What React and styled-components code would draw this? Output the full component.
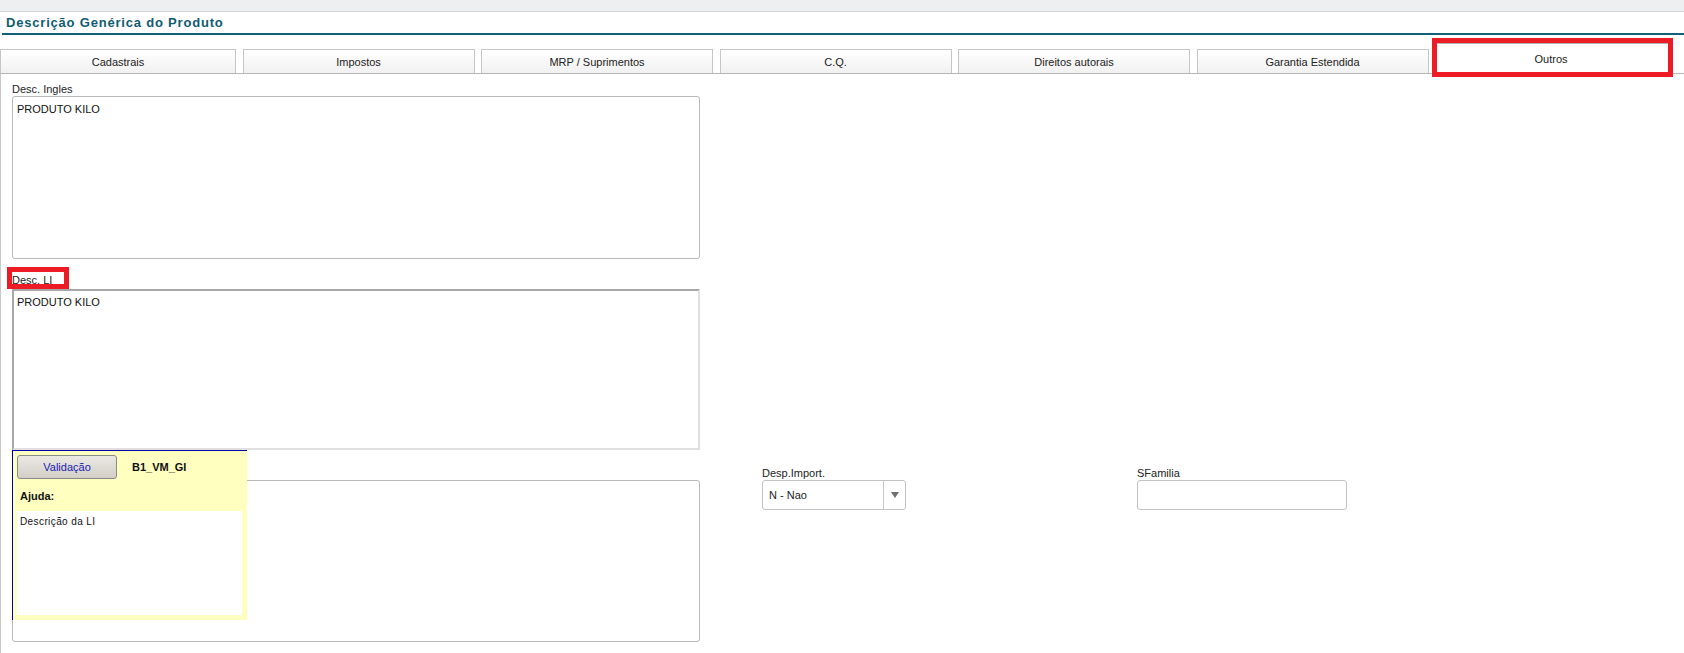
import React from "react";
import styled, { createGlobalStyle } from "styled-components";

const GlobalStyle = createGlobalStyle`
  *, *::before, *::after { box-sizing: border-box; }
  html, body {
    margin: 0;
    padding: 0;
    background: #ffffff;
  }
  body {
    font-family: "Liberation Sans", Arial, sans-serif;
    font-size: 11px;
    color: #1c1c1c;
  }
`;

const Page = styled.div`
  width: 1684px;
  height: 653px;
  overflow: hidden;
  display: flex;
  flex-direction: column;
  background: #ffffff;
`;

const TopBar = styled.div`
  flex: none;
  height: 12px;
  background: #eeeff1;
  border-bottom: 1px solid #d6d7d9;
`;

const Header = styled.h1`
  flex: none;
  margin: 0 0 0 2px;
  height: 23px;
  padding: 1px 0 0 4px;
  border-bottom: 2px solid #0e6176;
  font: bold 13px/20px "Liberation Sans", Arial, sans-serif;
  letter-spacing: 0.8px;
  color: #0f5c72;
`;

const TabStrip = styled.div`
  flex: none;
  margin-top: 8px;
  height: 30px;
  display: grid;
  grid-template-columns: 236px repeat(6, 232px);
  column-gap: 6.5px;
  align-items: end;
`;

const Tab = styled.div`
  position: relative;
  height: ${(p) => (p.$active ? "30px" : "24px")};
  margin: ${(p) => (p.$active ? "0 -2px" : "0")};
  border: 1px solid ${(p) => (p.$active ? "#b4b4b4" : "#c6c6c6")};
  border-bottom: none;
  background: ${(p) =>
    p.$active ? "#ffffff" : "linear-gradient(#ffffff, #f1f1f1)"};
  display: flex;
  align-items: center;
  justify-content: center;
  font-size: 11px;
  color: #222222;
  z-index: ${(p) => (p.$active ? 1 : 0)};

  ${(p) =>
    p.$marked &&
    `
    &::after {
      content: "";
      position: absolute;
      left: -2px;
      top: -6px;
      width: 241px;
      height: 39px;
      border: 5px solid #ed1c24;
      pointer-events: none;
    }
  `}
`;

const Panel = styled.div`
  flex: 1;
  border-top: 1px solid #b5b5b5;
  border-left: 1px solid #c9c9c9;
  padding: 8px 0 0 11px;
  display: flex;
  flex-direction: column;
  gap: 16px;
`;

const Row = styled.div`
  display: flex;
  align-items: flex-start;
`;

const Field = styled.div`
  position: relative;
  display: flex;
  flex-direction: column;
  width: ${(p) => p.$w}px;
  margin-left: ${(p) => p.$ml || 0}px;
`;

const Label = styled.label`
  position: relative;
  height: 14px;
  line-height: 14px;
  font-size: 11px;
  color: #222222;

  ${(p) =>
    p.$marked &&
    `
    top: -2px;
    &::after {
      content: "";
      position: absolute;
      left: -5px;
      top: -6px;
      width: 62px;
      height: 22px;
      border: 5px solid #ed1c24;
      pointer-events: none;
    }
  `}
`;

const TextBox = styled.div`
  height: ${(p) => p.$h}px;
  background: #ffffff;
  font-size: 11px;
  line-height: 14px;
  color: #111111;
  ${(p) =>
    p.$inset
      ? `
    border: 2px solid;
    border-color: #a8a8a8 #e0e0e0 #e0e0e0 #a8a8a8;
    padding: 4px 3px;
  `
      : `
    border: 1px solid #b8b8b8;
    border-radius: 3px;
    padding: 5px 4px;
  `}
`;

const SelectBox = styled.div`
  height: 30px;
  border: 1px solid #c3c3c3;
  border-radius: 3px;
  display: flex;
  background: #ffffff;
`;

const SelectValue = styled.div`
  flex: 1;
  padding-left: 6px;
  line-height: 28px;
  font-size: 11px;
  color: #1c1c1c;
`;

const SelectArrow = styled.div`
  width: 22px;
  border-left: 1px solid #c8c8c8;
  display: flex;
  align-items: center;
  justify-content: center;

  &::before {
    content: "";
    border-left: 4px solid transparent;
    border-right: 4px solid transparent;
    border-top: 6px solid #6f6f6f;
  }
`;

const InputBox = styled.div`
  height: 30px;
  border: 1px solid #c3c3c3;
  border-radius: 3px;
  background: #ffffff;
`;

const HelpPopup = styled.div`
  position: absolute;
  left: 0;
  top: -16px;
  width: 235px;
  height: 170px;
  background: #ffffc0;
  border-left: 1px solid #0000a8;
  border-top: 1px solid #0000a8;
  padding: 4px 5px 5px 4px;
  display: flex;
  flex-direction: column;
  z-index: 2;
`;

const HelpHead = styled.div`
  display: flex;
  align-items: center;
  gap: 15px;
`;

const ValidateButton = styled.button`
  width: 100px;
  height: 24px;
  padding: 0;
  border: 1px solid #8a8a8a;
  border-radius: 3px;
  background: linear-gradient(#ebe9e4, #d3cfc7);
  font: 11px "Liberation Sans", Arial, sans-serif;
  color: #1a1ab4;
`;

const FieldCode = styled.span`
  font-weight: bold;
  font-size: 11px;
  color: #111111;
`;

const HelpTitle = styled.div`
  margin-top: 10px;
  padding-left: 3px;
  height: 14px;
  line-height: 14px;
  font-weight: bold;
  font-size: 11px;
  color: #111111;
`;

const HelpText = styled.div`
  margin-top: 8px;
  height: 104px;
  background: #ffffff;
  padding: 4px 3px;
  font-size: 10px;
  line-height: 14px;
  letter-spacing: 0.4px;
  color: #111111;
`;

const tabs = [
  "Cadastrais",
  "Impostos",
  "MRP / Suprimentos",
  "C.Q.",
  "Direitos autorais",
  "Garantia Estendida",
  "Outros",
];

export default function App() {
  return (
    <>
      <GlobalStyle />
      <Page>
        <TopBar />
        <Header>Descrição Genérica do Produto</Header>
        <TabStrip>
          {tabs.map((t, i) => {
            const active = i === tabs.length - 1;
            return (
              <Tab key={t} $active={active} $marked={active}>
                {t}
              </Tab>
            );
          })}
        </TabStrip>
        <Panel>
          <Row>
            <Field $w={688}>
              <Label>Desc. Ingles</Label>
              <TextBox $h={163}>PRODUTO KILO</TextBox>
            </Field>
          </Row>
          <Row>
            <Field $w={688}>
              <Label $marked>Desc. LI</Label>
              <TextBox $h={161} $inset>
                PRODUTO KILO
              </TextBox>
            </Field>
          </Row>
          <Row>
            <Field $w={688}>
              <Label />
              <TextBox $h={162} />
              <HelpPopup>
                <HelpHead>
                  <ValidateButton type="button">Validação</ValidateButton>
                  <FieldCode>B1_VM_GI</FieldCode>
                </HelpHead>
                <HelpTitle>Ajuda:</HelpTitle>
                <HelpText>Descrição da LI</HelpText>
              </HelpPopup>
            </Field>
            <Field $w={144} $ml={62}>
              <Label>Desp.Import.</Label>
              <SelectBox>
                <SelectValue>N - Nao</SelectValue>
                <SelectArrow />
              </SelectBox>
            </Field>
            <Field $w={210} $ml={231}>
              <Label>SFamilia</Label>
              <InputBox />
            </Field>
          </Row>
        </Panel>
      </Page>
    </>
  );
}
